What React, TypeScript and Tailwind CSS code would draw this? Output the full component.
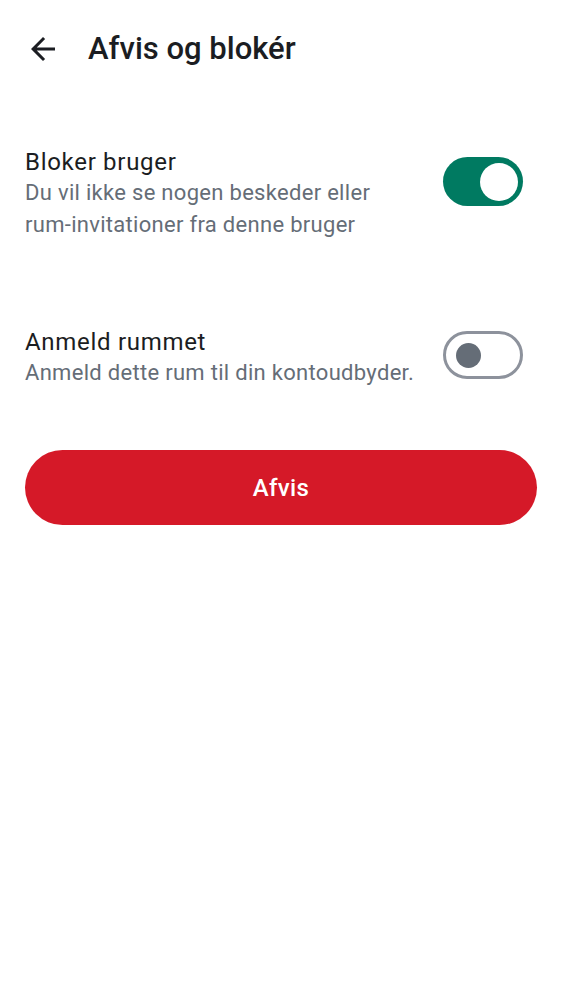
export default function App() {
  return (
    <div className="min-h-screen bg-white font-['Roboto',sans-serif] text-[#1b1d22]">
      {/* Top bar */}
      <div className="flex items-center pl-[25px] pt-[31px]">
        <svg width="36" height="36" viewBox="0 0 24 24" fill="#1b1d22">
          <path d="M20 11H7.83l5.59-5.59L12 4l-8 8 8 8 1.41-1.41L7.83 13H20v-2z" />
        </svg>
        <h1 className="ml-[27px] text-[31px] leading-[36px] font-medium">Afvis og blokér</h1>
      </div>

      <div className="px-[25px]">
        {/* Block user */}
        <div className="mt-[80px] flex items-start">
          <div className="flex-1">
            <div className="text-[24px] leading-[30px] tracking-[0.7px]">Bloker bruger</div>
            <div className="text-[22px] leading-[32px] tracking-[0.3px] text-[#656d77]">
              Du vil ikke se nogen beskeder eller{' '}
              <span className="whitespace-nowrap">rum-invitationer</span> fra denne bruger
            </div>
          </div>
          <div className="ml-[20px] mr-[14px] mt-[10px] flex h-[49px] w-[80px] shrink-0 items-center justify-end rounded-full bg-[#007a61] pr-[5px]">
            <div className="h-[38px] w-[38px] rounded-full bg-white" />
          </div>
        </div>

        {/* Report room */}
        <div className="mt-[86px] flex items-start">
          <div className="flex-1">
            <div className="text-[24px] leading-[30px] tracking-[0.7px]">Anmeld rummet</div>
            <div className="text-[22px] leading-[32px] tracking-[0.3px] text-[#656d77]">
              Anmeld dette rum til din kontoudbyder.
            </div>
          </div>
          <div className="ml-[20px] mr-[14px] mt-[4px] flex h-[48px] w-[80px] shrink-0 items-center rounded-full border-[3px] border-[#8d929c] pl-[10px]">
            <div className="h-[25px] w-[25px] rounded-full bg-[#656d77]" />
          </div>
        </div>

        <button className="mt-[61px] flex h-[75px] w-full items-center justify-center rounded-full bg-[#d51928] text-[24px] font-medium tracking-[0.3px] text-white">
          Afvis
        </button>
      </div>
    </div>
  )
}
